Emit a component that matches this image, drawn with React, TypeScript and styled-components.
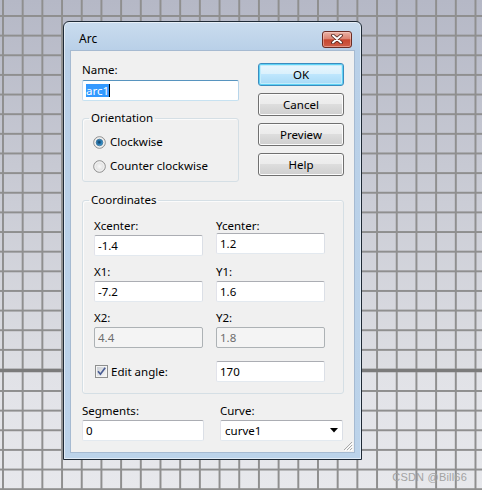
import React from 'react';
import styled, { createGlobalStyle } from 'styled-components';

const GlobalStyle = createGlobalStyle`
  html, body {
    margin: 0;
    padding: 0;
  }
  body {
    width: 482px;
    height: 490px;
    overflow: hidden;
    font-family: "Noto Sans", "Liberation Sans", sans-serif;
    font-size: 11.5px;
    color: #000;
  }
`;

const Desktop = styled.div`
  position: relative;
  width: 482px;
  height: 490px;
  display: flex;
  flex-direction: column;
  overflow: hidden;
`;

// grid paper behind the dialog, split by the x axis
const Sheet = styled.div<{ $from: string; $to: string; $offsetY: number; $grow?: boolean }>`
  height: ${(p) => (p.$grow ? 'auto' : '369px')};
  flex: ${(p) => (p.$grow ? 1 : 'none')};
  background-image: linear-gradient(90deg, #8f8f8f 1.6px, transparent 1.6px),
    linear-gradient(#8f8f8f 1.6px, transparent 1.6px),
    linear-gradient(${(p) => p.$from}, ${(p) => p.$to});
  background-size: 19.7px 19.65px, 19.7px 19.65px, 100% 100%;
  background-position: 2px 0, 0 ${(p) => p.$offsetY}px, 0 0;
`;

const Axis = styled.div`
  height: 2.5px;
  background: #7b7b7b;
`;

const Watermark = styled.div`
  position: absolute;
  right: 15px;
  bottom: 7px;
  font-family: "Liberation Sans", Arial, sans-serif;
  font-size: 11px;
  color: #a3a3a3;
  letter-spacing: 0.2px;
`;

const Window = styled.div`
  position: absolute;
  left: 63px;
  top: 21px;
  width: 299px;
  height: 439px;
  box-sizing: border-box;
  border: 1px solid #1f2a36;
  border-radius: 6px 6px 0 0;
  background: linear-gradient(180deg, #cadcee 0px, #b9d0e8 28px, #bcd3ea 100%);
  box-shadow: inset 0 0 0 1px rgba(255, 255, 255, 0.55);
  display: flex;
  flex-direction: column;
  padding: 0 6px 6px 6px;
`;

const TitleBar = styled.div`
  height: 28px;
  box-sizing: border-box;
  padding: 6px 3px 0 9px;
  display: flex;
  align-items: center;
  justify-content: space-between;
`;

const Title = styled.span`
  font-size: 12px;
  line-height: 22px;
  color: #000;
`;

const CloseButton = styled.button`
  width: 30px;
  height: 17px;
  padding: 0;
  box-sizing: border-box;
  border: 1px solid #6a2c24;
  border-radius: 3px;
  background: linear-gradient(180deg, #eab2a6 0%, #dc8472 45%, #c7462f 52%, #cf5e48 100%);
  box-shadow: inset 0 0 0 1px rgba(255, 220, 210, 0.45);
  display: flex;
  align-items: center;
  justify-content: center;
`;

const Client = styled.div`
  flex: 1;
  position: relative;
  background: #f0f0f0;
  border: 1px solid #a6bad1;
  padding: 12px 10px 0 11px;
  display: flex;
  flex-direction: column;
`;

const TopSection = styled.div`
  display: flex;
  justify-content: space-between;
`;

const LeftColumn = styled.div`
  width: 157px;
  display: flex;
  flex-direction: column;
`;

const ButtonColumn = styled.div`
  display: flex;
  flex-direction: column;
  gap: 7px;
`;

const Button = styled.button<{ $default?: boolean }>`
  width: 86px;
  height: 23px;
  padding: 0;
  box-sizing: border-box;
  font: inherit;
  color: #000;
  border: 1px solid ${(p) => (p.$default ? '#3b8cbf' : '#707070')};
  border-radius: 3px;
  background: ${(p) =>
    p.$default
      ? 'linear-gradient(180deg, #eaf6fd 0%, #d9f0fc 50%, #bee6fd 50%, #a7d9f5 100%)'
      : 'linear-gradient(180deg, #f2f2f2 0%, #ebebeb 50%, #dddddd 50%, #cfcfcf 100%)'};
  box-shadow: ${(p) =>
    p.$default ? 'inset 0 0 0 1px #5fd2f5, inset 0 0 0 2px #c4ecfb' : 'inset 0 0 0 1px #fcfcfc'};
`;

const Label = styled.div`
  line-height: 14px;
  height: 14px;
  white-space: nowrap;
`;

const TextField = styled.input<{ $lift?: boolean }>`
  display: block;
  width: 100%;
  height: 21px;
  margin: ${(p) => (p.$lift ? 0 : 2)}px 0 0;
  box-sizing: border-box;
  padding: 0 3px;
  font: inherit;
  color: #000;
  background: #fff;
  border: 1px solid;
  border-color: #abadb3 #dbdfe6 #e3e9ef #e2e3ea;
  border-radius: 2px;
  outline: none;

  &:disabled {
    background: #f4f4f4;
    border-color: #adb2b5;
    color: #6d6d6d;
    -webkit-text-fill-color: #6d6d6d;
  }
`;

const NameBox = styled.div`
  height: 21px;
  margin-top: 3px;
  box-sizing: border-box;
  padding: 0 3px;
  background: #fff;
  border: 1px solid;
  border-color: #5794bf #b7d5ea #c7e2f1 #c5daed;
  border-radius: 2px;
  display: flex;
  align-items: center;
`;

const Selection = styled.span`
  background: #3399ff;
  color: #fff;
  line-height: 13px;
  border-right: 1px solid #000;
`;

const GroupBox = styled.fieldset<{ $gap: number }>`
  margin: ${(p) => p.$gap}px 0 0;
  padding: 0;
  min-width: 0;
  box-sizing: border-box;
  border: 1px solid #d5dfe5;
  border-radius: 3px;
  box-shadow: inset 1px 1px 0 #fbfbfb;
`;

const Legend = styled.legend`
  margin-left: 6px;
  padding: 0 2px;
  line-height: 14px;
`;

const RadioList = styled.div`
  padding: 9px 0 7px 10px;
  display: flex;
  flex-direction: column;
  gap: 8px;
`;

const Option = styled.label`
  display: flex;
  align-items: center;
  gap: 4px;
  height: 16px;
  line-height: 16px;
  white-space: nowrap;
`;

const CoordGrid = styled.div`
  padding: 12px 0 11px 11px;
  display: grid;
  grid-template-columns: 109px 109px;
  column-gap: 13px;
  row-gap: 9px;
`;

const Field = styled.div`
  display: flex;
  flex-direction: column;
`;

const AngleRow = styled.div`
  grid-column: 1 / -1;
  margin-top: 4px;
  display: grid;
  grid-template-columns: 109px 109px;
  column-gap: 13px;
  align-items: center;
`;

const CheckLabel = styled.label`
  display: flex;
  align-items: center;
  gap: 3px;
  padding-left: 1px;
  white-space: nowrap;
`;

const BottomGrid = styled.div`
  margin-top: 10px;
  display: grid;
  grid-template-columns: 122px 123px;
  column-gap: 16px;
`;

const Combo = styled.div`
  height: 21px;
  margin-top: 2px;
  box-sizing: border-box;
  padding: 0 4px 0 4px;
  background: #fff;
  border: 1px solid;
  border-color: #abadb3 #dbdfe6 #e3e9ef #e2e3ea;
  border-radius: 2px;
  display: flex;
  align-items: center;
  justify-content: space-between;
`;

const Grip = styled.svg`
  position: absolute;
  right: 1px;
  bottom: 1px;
`;

const Radio: React.FC<{ checked?: boolean }> = ({ checked }) => (
  <svg width="13" height="13" viewBox="0 0 13 13">
    <defs>
      <radialGradient id="rbg" cx="0.5" cy="0.5" r="0.6">
        <stop offset="0" stopColor="#f8f8f8" />
        <stop offset="1" stopColor="#d2d2d2" />
      </radialGradient>
      <radialGradient id="rdot" cx="0.45" cy="0.45" r="0.6">
        <stop offset="0" stopColor="#0d3a5c" />
        <stop offset="0.6" stopColor="#2c7fb8" />
        <stop offset="1" stopColor="#5fc0f2" />
      </radialGradient>
    </defs>
    <circle cx="6.5" cy="6.5" r="5.8" fill="url(#rbg)" stroke="#8d8d8d" strokeWidth="1" />
    <circle cx="6.5" cy="6.5" r="4.6" fill="none" stroke="#fafafa" strokeWidth="0.8" />
    {checked && <circle cx="6.5" cy="6.5" r="3.3" fill="url(#rdot)" stroke="#1f567d" strokeWidth="0.6" />}
  </svg>
);

const CheckBox: React.FC = () => (
  <svg width="13" height="13" viewBox="0 0 13 13">
    <defs>
      <linearGradient id="cbg" x1="0" y1="0" x2="1" y2="1">
        <stop offset="0" stopColor="#cbcfd5" />
        <stop offset="1" stopColor="#f6f6f6" />
      </linearGradient>
    </defs>
    <rect x="0.5" y="0.5" width="12" height="12" fill="#f4f4f4" stroke="#8e8f8f" />
    <rect x="2" y="2" width="9" height="9" fill="url(#cbg)" />
    <path d="M3 6.3 L5.4 9.2 L10.2 2.8" fill="none" stroke="#4a5d94" strokeWidth="1.7" />
  </svg>
);

const App: React.FC = () => (
  <>
    <GlobalStyle />
    <Desktop>
      <Sheet $from="#b5b8c6" $to="#dddee3" $offsetY={15} />
      <Axis />
      <Sheet $from="#e1e2e7" $to="#e7e8ec" $offsetY={18} $grow />

      <Window>
        <TitleBar>
          <Title>Arc</Title>
          <CloseButton aria-label="Close">
            <svg width="12" height="10" viewBox="0 0 12 10">
              <path d="M2 1.5 L10 8.5 M10 1.5 L2 8.5" stroke="#4a1e18" strokeWidth="3.6" strokeLinecap="round" />
              <path d="M2 1.5 L10 8.5 M10 1.5 L2 8.5" stroke="#ffffff" strokeWidth="2" strokeLinecap="round" />
            </svg>
          </CloseButton>
        </TitleBar>

        <Client>
          <TopSection>
            <LeftColumn>
              <Label>Name:</Label>
              <NameBox>
                <Selection>arc1</Selection>
              </NameBox>
              <GroupBox $gap={10}>
                <Legend>Orientation</Legend>
                <RadioList>
                  <Option>
                    <Radio checked />
                    Clockwise
                  </Option>
                  <Option>
                    <Radio />
                    Counter clockwise
                  </Option>
                </RadioList>
              </GroupBox>
            </LeftColumn>
            <ButtonColumn>
              <Button $default>OK</Button>
              <Button>Cancel</Button>
              <Button>Preview</Button>
              <Button>Help</Button>
            </ButtonColumn>
          </TopSection>

          <GroupBox $gap={11}>
            <Legend>Coordinates</Legend>
            <CoordGrid>
              <Field>
                <Label>Xcenter:</Label>
                <TextField readOnly value="-1.4" />
              </Field>
              <Field>
                <Label>Ycenter:</Label>
                <TextField readOnly value="1.2" $lift />
              </Field>
              <Field>
                <Label>X1:</Label>
                <TextField readOnly value="-7.2" />
              </Field>
              <Field>
                <Label>Y1:</Label>
                <TextField readOnly value="1.6" />
              </Field>
              <Field>
                <Label>X2:</Label>
                <TextField disabled value="4.4" />
              </Field>
              <Field>
                <Label>Y2:</Label>
                <TextField disabled value="1.8" />
              </Field>
              <AngleRow>
                <CheckLabel>
                  <CheckBox />
                  Edit angle:
                </CheckLabel>
                <TextField readOnly value="170" $lift />
              </AngleRow>
            </CoordGrid>
          </GroupBox>

          <BottomGrid>
            <Field>
              <Label>Segments:</Label>
              <TextField readOnly value="0" />
            </Field>
            <Field>
              <Label>Curve:</Label>
              <Combo>
                <span>curve1</span>
                <svg width="8" height="5" viewBox="0 0 8 5">
                  <polygon points="0,0 8,0 4,4.5" fill="#000" />
                </svg>
              </Combo>
            </Field>
          </BottomGrid>

          <Grip width="11" height="11" viewBox="0 0 11 11">
            <path d="M10 2 L2 10 M10 5 L5 10 M10 8 L8 10" stroke="#a9a9a9" strokeWidth="1" />
            <path d="M11 3 L3 11 M11 6 L6 11 M11 9 L9 11" stroke="#ffffff" strokeWidth="1" />
          </Grip>
        </Client>
      </Window>

      <Watermark>CSDN @Bill66</Watermark>
    </Desktop>
  </>
);

export default App;
